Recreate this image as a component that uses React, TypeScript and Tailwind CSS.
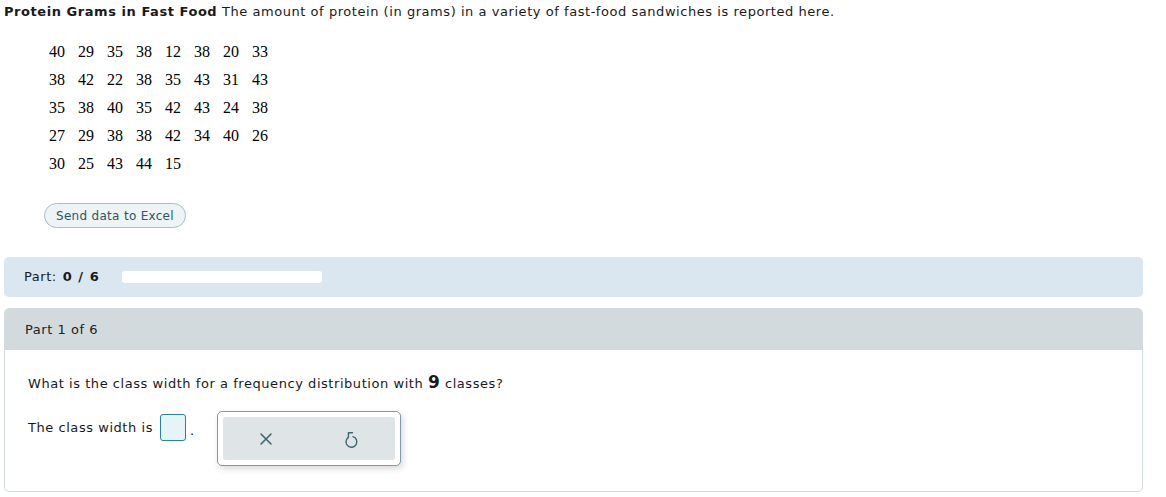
import React from 'react';

const rows = [
  [40, 29, 35, 38, 12, 38, 20, 33],
  [38, 42, 22, 38, 35, 43, 31, 43],
  [35, 38, 40, 35, 42, 43, 24, 38],
  [27, 29, 38, 38, 42, 34, 40, 26],
  [30, 25, 43, 44, 15],
];

const App = () => {
  return (
    <div className="bg-white min-h-[497px] text-[13px] tracking-[0.55px] text-[#1a1a1a] font-['DejaVu_Sans',Verdana,sans-serif]">
      {/* Problem statement */}
      <p className="px-1 pt-[3px] leading-[18px]">
        <span className="font-bold">Protein Grams in Fast Food</span> The amount of protein (in grams) in a variety of
        fast-food sandwiches is reported here.
      </p>

      {/* Data table */}
      <div className="pl-[49px] pt-[17px] font-['Liberation_Serif',serif] text-[16px] tracking-normal text-black">
        {rows.map((row, i) => (
          <div key={i} className="flex h-[28px] items-center">
            {row.map((n, j) => (
              <span key={j} className="w-[29px]">
                {n}
              </span>
            ))}
          </div>
        ))}
      </div>

      <div className="pl-[44px] pt-[25px]">
        <button className="h-[25px] rounded-full border border-[#a8bfc7] bg-[#eef3f5] px-[11px] text-[12px] tracking-[0.3px] text-[#2b5766]">
          Send data to Excel
        </button>
      </div>

      {/* Progress */}
      <div className="mx-1 mt-[29px] flex h-[40px] w-[1139px] items-center rounded-[5px] bg-[#dae6f0] pl-[20px]">
        <span>Part:</span>
        <span className="ml-[6px] font-bold tracking-[1px]">0 / 6</span>
        <div className="ml-[22px] h-[12px] w-[200px] rounded-[3px] bg-white" />
      </div>

      {/* Part card */}
      <div className="mx-1 mt-[11px] w-[1139px] rounded-[5px] border border-[#d2dadd] bg-white">
        <div className="flex h-[41px] items-center rounded-t-[4px] bg-[#d2dadd] pl-[20px] text-[#222]">Part 1 of 6</div>
        <div className="px-[23px] pb-[25px] pt-[24px]">
          <p className="leading-[20px]">
            What is the class width for a frequency distribution with{' '}
            <span className="text-[17px] font-bold leading-none">9</span> classes?
          </p>
          <div className="mt-[19px] flex items-start">
            <div className="flex h-[27px] items-center pt-[2px]">
              <span>The class width is</span>
              <span className="ml-[7px] h-[27px] w-[26px] rounded-[3px] border border-[#1e8a9d] bg-[#e6f4f8]" />
              <span className="ml-[4px] mt-[6px]">.</span>
            </div>
            <div className="ml-[22px] -mt-[2px] rounded-[5px] border border-[#7b9ba6] bg-white p-[5px] shadow-[2px_3px_6px_rgba(0,0,0,0.15)]">
              <div className="flex h-[43px] w-[172px] items-center rounded-[3px] bg-[#dfe5e7] text-[#3d6673]">
                <div className="flex w-1/2 justify-center">
                  <svg width="14" height="14" viewBox="0 0 14 14" fill="none" stroke="currentColor" strokeWidth="1.6" strokeLinecap="round">
                    <path d="M2 2l10 10M12 2L2 12" />
                  </svg>
                </div>
                <div className="flex w-1/2 justify-center pt-[2px]">
                  <svg width="14" height="18" viewBox="0 0 14 18" fill="none" stroke="currentColor" strokeWidth="1.4" strokeLinecap="round" strokeLinejoin="round">
                    <path d="M7.5 1.8H3.4V6.4" />
                    <path d="M3.4 6.4A5.4 5.4 0 1 0 8 5.7" />
                  </svg>
                </div>
              </div>
            </div>
          </div>
        </div>
      </div>
    </div>
  );
};

export default App;
